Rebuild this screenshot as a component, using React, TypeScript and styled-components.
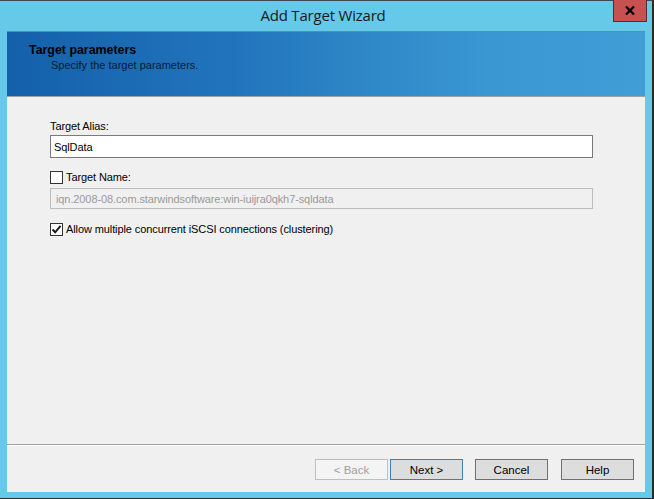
import React from "react";
import styled, { createGlobalStyle } from "styled-components";

const Global = createGlobalStyle`
  html, body { margin: 0; padding: 0; background: #ffffff; }
  body { font-family: "Liberation Sans", Arial, sans-serif; }
  * { box-sizing: border-box; }
`;

const Window = styled.div`
  width: 654px;
  height: 499px;
  background: #65c9ea;
  border-top: 1px solid #3a4a52;
  border-right: 2px solid #2c2c2c;
  border-bottom: 1px solid #2c2c2c;
  display: flex;
  flex-direction: column;
  position: relative;
`;

const TitleBar = styled.div`
  height: 30px;
  display: flex;
  align-items: center;
  justify-content: center;
  padding-right: 6px;
`;

const Title = styled.span`
  font-family: "Open Sans", "Liberation Sans", sans-serif;
  font-size: 15px;
  color: #1a1a1a;
  margin-top: -2px;
  letter-spacing: -0.2px;
`;

const CloseButton = styled.div`
  position: absolute;
  top: -1px;
  left: 613px;
  width: 34px;
  height: 22px;
  background: #c75050;
  border: 1px solid #4a3030;
  border-top: none;
  display: flex;
  align-items: center;
  justify-content: center;
`;

const Client = styled.div`
  margin: 0 7px 6px 7px;
  flex: 1;
  background: #f0f0f0;
  display: flex;
  flex-direction: column;
`;

const Header = styled.div`
  height: 66px;
  background: linear-gradient(90deg, #1460aa 0%, #2174bb 35%, #3a97d2 75%, #409dd6 100%);
  border-top: 1px solid #5b89b3;
  border-bottom: 1px solid #a0a0a0;
  padding: 11px 0 0 22px;
  color: #000;
`;

const HeaderTitle = styled.div`
  font-weight: bold;
  font-size: 12.4px;
  line-height: 14px;
`;

const HeaderSub = styled.div`
  font-size: 11px;
  line-height: 14px;
  margin-top: 1px;
  padding-left: 22px;
  color: #0a1a2e;
`;

const Content = styled.div`
  flex: 1;
  padding: 22px 52px 0 43px;
  display: flex;
  flex-direction: column;
  font-size: 11px;
  letter-spacing: -0.1px;
`;

const Label = styled.div`
  line-height: 14px;
  color: #000;
`;

const TextField = styled.div<{ $disabled?: boolean; $top: number }>`
  height: ${(p) => (p.$disabled ? 21 : 23)}px;
  margin-top: ${(p) => p.$top}px;
  border: 1px solid ${(p) => (p.$disabled ? "#bcbcbc" : "#7a7a7a")};
  background: ${(p) => (p.$disabled ? "#f0f0f0" : "#ffffff")};
  color: ${(p) => (p.$disabled ? "#9a9a9a" : "#000")};
  display: flex;
  align-items: center;
  padding-left: ${(p) => (p.$disabled ? "5px" : "3px")};
`;

const CheckRow = styled.label<{ $top: number }>`
  display: flex;
  align-items: center;
  gap: 3px;
  margin-top: ${(p) => p.$top}px;
  color: #000;
  height: 14px;
`;

const Box = styled.span`
  width: 13px;
  height: 13px;
  border: 1px solid #333333;
  background: #ffffff;
  display: inline-flex;
  align-items: center;
  justify-content: center;
  flex: none;
`;

const Separator = styled.div`
  height: 2px;
  border-top: 1px solid #a0a0a0;
  border-bottom: 1px solid #ffffff;
`;

const ButtonBar = styled.div`
  height: 46px;
  display: flex;
  justify-content: flex-end;
  align-items: flex-start;
  padding: 13px 11px 0 0;
`;

const Button = styled.div<{ $variant?: "default" | "disabled" | "normal"; $gap?: number }>`
  width: 73px;
  height: 21px;
  margin-left: ${(p) => p.$gap ?? 0}px;
  display: flex;
  align-items: center;
  justify-content: center;
  font-size: 11.5px;
  border: 1px solid
    ${(p) =>
      p.$variant === "disabled" ? "#bfbfbf" : p.$variant === "default" ? "#3c7fb1" : "#707070"};
  background: ${(p) => (p.$variant === "disabled" ? "#f4f4f4" : "#dddddd")};
  color: ${(p) => (p.$variant === "disabled" ? "#a0a0a0" : "#000")};
`;

const Check = () => (
  <svg width="11" height="11" viewBox="0 0 11 11">
    <path d="M1.5 5.5 L4.2 8.3 L9.5 1.8" fill="none" stroke="#1a1a1a" strokeWidth="2" />
  </svg>
);

const CloseX = () => (
  <svg width="10" height="9" viewBox="0 0 10 9">
    <path d="M1 0.5 L9 8.5 M9 0.5 L1 8.5" stroke="#000" strokeWidth="2.2" />
  </svg>
);

export default function App() {
  return (
    <>
      <Global />
      <Window>
        <TitleBar>
          <Title>Add Target Wizard</Title>
        </TitleBar>
        <CloseButton>
          <CloseX />
        </CloseButton>
        <Client>
          <Header>
            <HeaderTitle>Target parameters</HeaderTitle>
            <HeaderSub>Specify the target parameters.</HeaderSub>
          </Header>
          <Content>
            <Label>Target Alias:</Label>
            <TextField $top={2}>SqlData</TextField>
            <CheckRow $top={12}>
              <Box />
              Target Name:
            </CheckRow>
            <TextField $disabled $top={4}>
              iqn.2008-08.com.starwindsoftware:win-iuijra0qkh7-sqldata
            </TextField>
            <CheckRow $top={13}>
              <Box>
                <Check />
              </Box>
              Allow multiple concurrent iSCSI connections (clustering)
            </CheckRow>
          </Content>
          <Separator />
          <ButtonBar>
            <Button $variant="disabled">&lt; Back</Button>
            <Button $variant="default" $gap={2}>Next &gt;</Button>
            <Button $variant="normal" $gap={12}>Cancel</Button>
            <Button $variant="normal" $gap={13}>Help</Button>
          </ButtonBar>
        </Client>
      </Window>
    </>
  );
}
